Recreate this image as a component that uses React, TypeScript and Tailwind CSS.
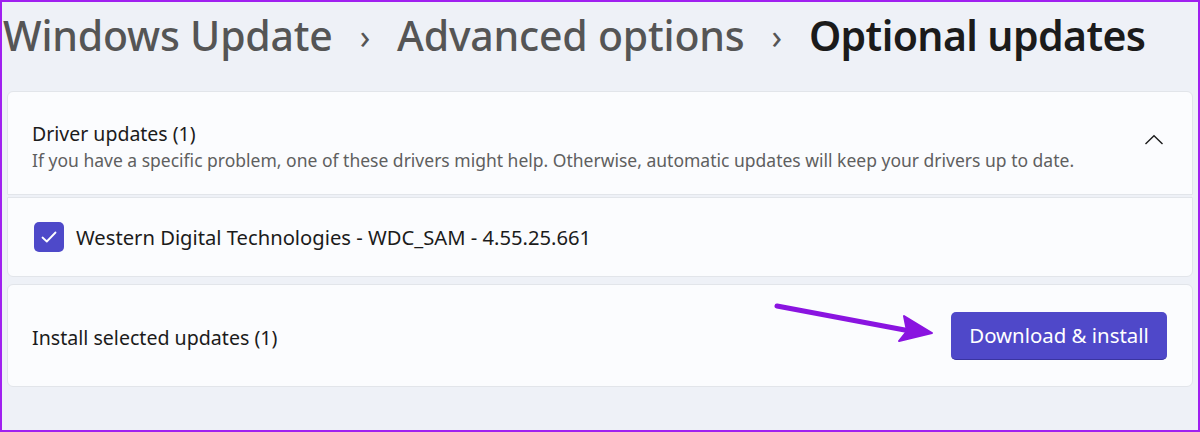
import React from "react";

export default function App() {
  const font = { fontFamily: '"Noto Sans", "Open Sans", sans-serif' };
  return (
    <div
      className="w-[1200px] h-[432px] bg-[#eef1f7] border-2 border-[#a020f0] overflow-hidden relative"
      style={font}
    >
      <div className="flex items-center h-[66px] pl-[1px] pt-[1px] text-[41px] leading-none tracking-[-0.2px]">
        <span className="text-[#555555] font-medium">Windows Update</span>
        <span className="text-[#555555] text-[34px] mx-[27px]">›</span>
        <span className="text-[#555555] font-medium">Advanced options</span>
        <span className="text-[#555555] text-[34px] mx-[27px]">›</span>
        <span className="text-[#1b1b1b] font-semibold tracking-[-0.6px]">Optional updates</span>
      </div>
      <div className="pl-[5px] pr-[5px] pt-[23px] flex flex-col">
        <div className="flex flex-col gap-[2px]">
          <div className="h-[104px] bg-[#fbfcfe] border border-[#e2e5ea] rounded-t-[6px] flex items-center pl-[24px] pr-[28px]">
            <div className="flex-1 flex flex-col pt-[7px]">
              <div className="text-[19.5px] text-[#1b1b1b] leading-[26px]">Driver updates (1)</div>
              <div className="text-[17.5px] text-[#5f5f5f] leading-[26px]">
                If you have a specific problem, one of these drivers might help. Otherwise, automatic updates will keep your drivers up to date.
              </div>
            </div>
            <svg width="20" height="12" viewBox="0 0 20 12" className="mt-[-6px]">
              <path d="M1.5 10 L10 1.8 L18.5 10" fill="none" stroke="#1b1b1b" strokeWidth="1.4" />
            </svg>
          </div>
          <div className="h-[80px] bg-[#fbfcfe] border border-[#e2e5ea] rounded-b-[6px] flex items-center pl-[26px]">
            <div className="w-[30px] h-[30px] rounded-[5px] bg-[#4e49c9] flex items-center justify-center">
              <svg width="16" height="12" viewBox="0 0 16 12">
                <path d="M1.5 6.5 L5.8 10.5 L14.5 1.5" fill="none" stroke="#ffffff" strokeWidth="1.8" strokeLinecap="round" strokeLinejoin="round" />
              </svg>
            </div>
            <div className="ml-[12px] text-[20.2px] text-[#1b1b1b]">
              Western Digital Technologies - WDC_SAM - 4.55.25.661
            </div>
          </div>
        </div>
        <div className="mt-[7px] h-[103px] bg-[#fbfcfe] border border-[#e2e5ea] rounded-[6px] flex items-center pl-[24px] pr-[25px] relative">
          <div className="flex-1 text-[19.6px] text-[#1b1b1b] pt-[4px]">Install selected updates (1)</div>
          <div className="w-[216px] h-[48px] rounded-[5px] bg-[#4f48c9] border-b border-[#3a34a0] flex items-center justify-center text-white text-[20.4px]">
            Download &amp; install
          </div>
          <svg
            className="absolute left-[762px] top-[17px]"
            width="170"
            height="45"
            viewBox="0 0 170 45"
          >
            <path d="M7 4 L140 29" stroke="#8a14e0" strokeWidth="5" strokeLinecap="round" />
            <path d="M134 14 L162 31 L129 39 L137 29 Z" fill="#8a14e0" stroke="#8a14e0" strokeWidth="2" strokeLinejoin="round" />
          </svg>
        </div>
      </div>
    </div>
  );
}
